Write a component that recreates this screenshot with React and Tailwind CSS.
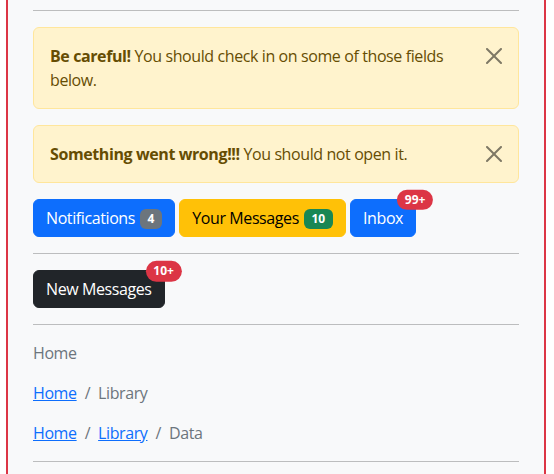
import React from "react";

const FONT = { fontFamily: '"Segoe UI", "Open Sans", "Noto Sans", sans-serif' };

function CloseX() {
  return (
    <button className="absolute top-0 right-0 px-4 py-5 opacity-50" aria-label="Close">
      <svg width="16" height="16" viewBox="0 0 16 16" className="block">
        <path
          fill="#000"
          d="M.293.293a1 1 0 0 1 1.414 0L8 6.586 14.293.293a1 1 0 1 1 1.414 1.414L9.414 8l6.293 6.293a1 1 0 0 1-1.414 1.414L8 9.414l-6.293 6.293a1 1 0 0 1-1.414-1.414L6.586 8 .293 1.707a1 1 0 0 1 0-1.414z"
        />
      </svg>
    </button>
  );
}

function Alert({ strong, children }) {
  return (
    <div className="relative mb-4 rounded-[6px] border border-[#ffe69c] bg-[#fff3cd] py-4 pl-4 pr-12 text-[#664d03]">
      <strong className="font-bold">{strong}</strong> {children}
      <CloseX />
    </div>
  );
}

function Badge({ bg, children }) {
  return (
    <span
      className={`relative -top-px ml-[1px] inline-block rounded-[6px] px-[7.8px] py-[4.2px] text-[12px] font-bold leading-none tracking-normal text-white align-baseline ${bg}`}
    >
      {children}
    </span>
  );
}

function Pill({ children }) {
  return (
    <span className="absolute top-0 left-full -translate-x-1/2 -translate-y-1/2 inline-block rounded-full bg-[#dc3545] px-[7.8px] py-[4.2px] text-[12px] font-bold leading-none tracking-normal text-white">
      {children}
    </span>
  );
}

function Hr() {
  return <div className="my-4 h-px bg-[#bcbdbe]" />;
}

function Sep() {
  return <span className="px-2 text-[#6c757d]">/</span>;
}

function Link({ children }) {
  return (
    <a href="#" className="text-[#0d6efd] underline">
      {children}
    </a>
  );
}

export default function App() {
  return (
    <div className="flex h-[474px] w-full overflow-hidden bg-white pl-[6px]" style={FONT}>
      <div className="flex w-[540px] shrink-0 bg-[#dc3545] px-[2px]">
        <div className="w-full bg-[#f8f9fa] px-[25px] pt-[10px] text-[16px] leading-6 tracking-[-0.4px] text-[#212529]">
          <div className="mt-0 mb-4 h-px bg-[#bcbdbe]" />
          <Alert strong="Be careful!">You should check in on some of those fields below.</Alert>
          <Alert strong="Something went wrong!!!">You should not open it.</Alert>
          <div className="flex gap-1">
            <button className="rounded-[6px] border border-[#0d6efd] bg-[#0d6efd] px-3 py-[6px] text-white">
              Notifications <Badge bg="bg-[#6c757d]">4</Badge>
            </button>
            <button className="rounded-[6px] border border-[#ffc107] bg-[#ffc107] px-3 py-[6px] text-black">
              Your Messages <Badge bg="bg-[#198754]">10</Badge>
            </button>
            <button className="relative rounded-[6px] border border-[#0d6efd] bg-[#0d6efd] px-3 py-[6px] text-white">
              Inbox
              <Pill>99+</Pill>
            </button>
          </div>
          <Hr />
          <div className="flex">
            <button className="relative rounded-[6px] border border-[#212529] bg-[#212529] px-3 py-[6px] text-white">
              New Messages
              <Pill>10+</Pill>
            </button>
          </div>
          <Hr />
          <nav className="mb-4 text-[#6c757d]">Home</nav>
          <nav className="mb-4">
            <Link>Home</Link>
            <Sep />
            <span className="text-[#6c757d]">Library</span>
          </nav>
          <nav className="mb-4">
            <Link>Home</Link>
            <Sep />
            <Link>Library</Link>
            <Sep />
            <span className="text-[#6c757d]">Data</span>
          </nav>
          <div className="h-px bg-[#bcbdbe]" />
        </div>
      </div>
    </div>
  );
}
